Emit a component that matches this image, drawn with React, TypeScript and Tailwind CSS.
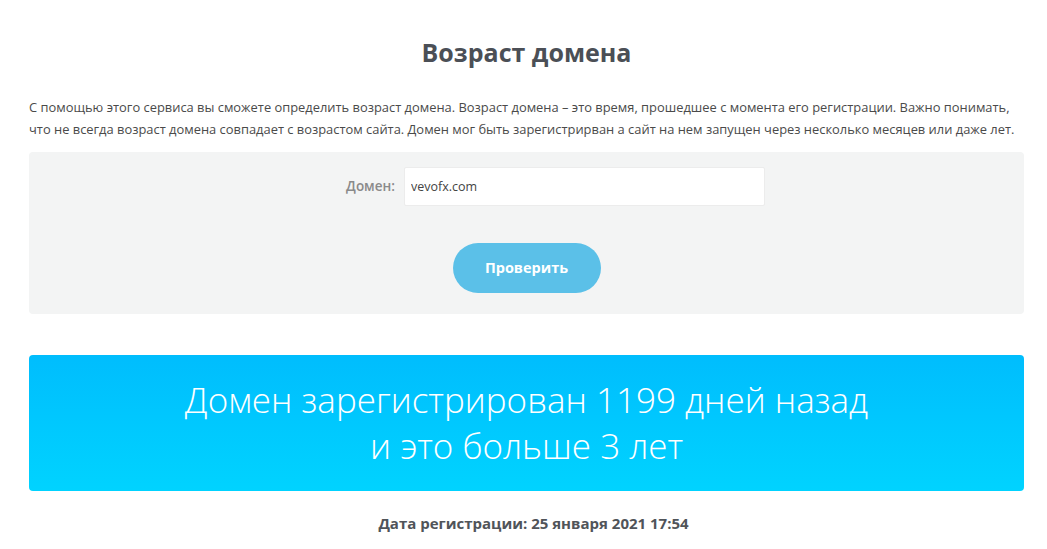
import { useState } from "react";

export default function App() {
  const [domain, setDomain] = useState("vevofx.com");

  return (
    <div className="min-h-screen bg-white font-['Open_Sans',sans-serif]">
      <div className="ml-[29px] w-[995px] pt-[34px]">
        <h1 className="text-center text-[25px] font-bold leading-[36px] text-[#4b4f56]">
          Возраст домена
        </h1>

        <p className="mt-[26px] text-[12.9px] leading-[22px] text-[#4a4a4a]">
          С помощью этого сервиса вы сможете определить возраст домена. Возраст домена – это время, прошедшее с момента его регистрации. Важно понимать,
          <br />
          что не всегда возраст домена совпадает с возрастом сайта. Домен мог быть зарегистрирван а сайт на нем запущен через несколько месяцев или даже лет.
        </p>

        {/* форма проверки */}
        <div className="mt-[12px] flex h-[162px] flex-col items-center rounded-[4px] bg-[#f3f4f4] pt-[15px]">
          <div className="flex items-center gap-[9px]">
            <label className="w-[107px] text-right text-[13.5px] font-semibold text-[#8a8a8a]">Домен:</label>
            <input
              value={domain}
              onChange={(e) => setDomain(e.target.value)}
              className="h-[39px] w-[361px] rounded-[2px] border border-[#ececec] bg-white px-[6px] text-[12.5px] text-[#444] outline-none"
            />
          </div>
          <button className="mt-[37px] h-[50px] w-[148px] rounded-full bg-[#5bc0e8] text-[14.5px] font-bold text-white">
            Проверить
          </button>
        </div>

        {/* результат */}
        <div className="mt-[41px] flex h-[136px] flex-col items-center justify-center rounded-[4px] bg-gradient-to-b from-[#00bdfd] to-[#00d3ff] text-[35px] font-light leading-[46px] text-white">
          <div>Домен зарегистрирован 1199 дней назад</div>
          <div>и это больше 3 лет</div>
        </div>

        <p className="mt-[21px] pl-[14px] text-center text-[15px] font-bold text-[#505459]">
          Дата регистрации: 25 января 2021 17:54
        </p>
      </div>
    </div>
  );
}
